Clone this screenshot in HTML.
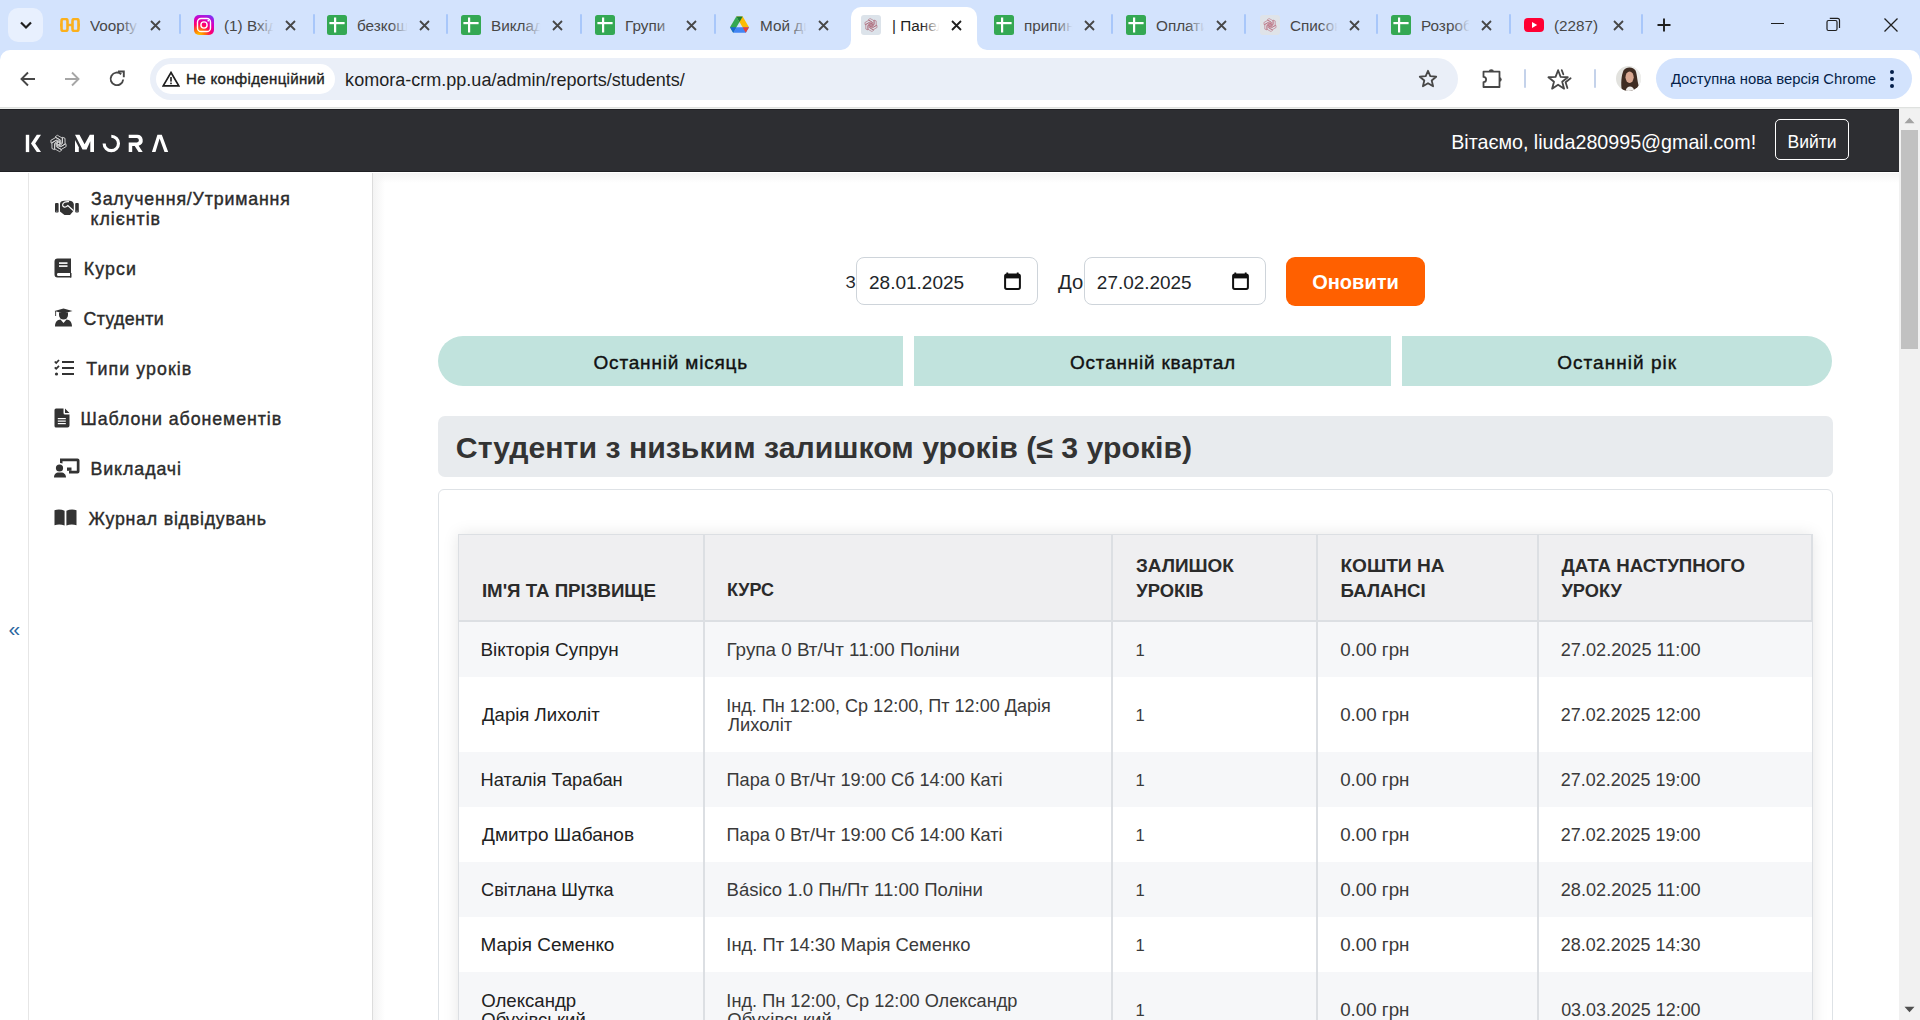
<!DOCTYPE html>
<html><head><meta charset="utf-8">
<style>
*{box-sizing:border-box;margin:0;padding:0}
html,body{width:1920px;height:1020px;overflow:hidden;background:#fff;font-family:"Liberation Sans",sans-serif;color:#333}
.abs{position:absolute}
#tabs{position:absolute;left:0;top:0;width:1920px;height:50px;background:#d3e3fd}
#toolbar{position:absolute;left:0;top:50px;width:1920px;height:57px;background:#fff}
.ttl{top:15.5px;height:21px;font-size:15.3px;line-height:20px;white-space:nowrap;overflow:hidden}
.fade{position:absolute;right:0;top:0;width:22px;height:20px}
</style></head><body>
<div id="tabs">
  <div class="abs" style="left:8px;top:8px;width:35px;height:34px;border-radius:10px;background:#e8f0fe"></div>
  <svg class="abs" style="left:19px;top:19px" width="14" height="12" viewBox="0 0 14 12"><path d="M2 3.5 L7 8.5 L12 3.5" fill="none" stroke="#1f1f1f" stroke-width="2.2"/></svg>
  <!-- active tab -->
  <div class="abs" style="left:851px;top:7px;width:126px;height:44px;background:#fff;border-radius:10px 10px 0 0"></div>
  <div class="abs" style="left:839px;top:40px;width:12px;height:11px;background:#fff"></div>
  <div class="abs" style="left:829px;top:30px;width:22px;height:20px;background:#d3e3fd;border-radius:0 0 10px 0"></div>
  <div class="abs" style="left:977px;top:40px;width:12px;height:11px;background:#fff"></div>
  <div class="abs" style="left:977px;top:30px;width:22px;height:20px;background:#d3e3fd;border-radius:0 0 0 10px"></div>
  <svg class="abs" style="left:60px;top:18px" width="20" height="14" viewBox="0 0 20 14"><rect x="1.5" y="1" width="6" height="12" rx="2" fill="none" stroke="#fbb01c" stroke-width="2.6"/><rect x="12.5" y="1" width="6" height="12" rx="2" fill="none" stroke="#fbb01c" stroke-width="2.6"/><rect x="7" y="5.8" width="6" height="2.4" fill="#fbb01c"/><rect x="0" y="5.5" width="1.6" height="3" fill="#fbb01c"/><rect x="18.4" y="5.5" width="1.6" height="3" fill="#fbb01c"/></svg>
<div class="abs ttl" style="left:90px;width:53px;color:#474747">Voopty<span class="fade" style="background:linear-gradient(90deg,rgba(0,0,0,0),#d3e3fd 80%)"></span></div>
<svg class="abs" style="left:150.0px;top:19.5px" width="11" height="11" viewBox="0 0 11 11"><path d="M1 1 L10 10 M10 1 L1 10" stroke="#474747" stroke-width="1.8"/></svg>
<div class="abs" style="left:179px;top:14px;width:2px;height:20px;border-radius:1px;background:#a8c7fa"></div>
<svg class="abs" style="left:194px;top:15px" width="20" height="20" viewBox="0 0 20 20"><defs><radialGradient id="ig" cx="0.25" cy="1.05" r="1.2"><stop offset="0" stop-color="#ffd600"/><stop offset="0.25" stop-color="#ff7a00"/><stop offset="0.5" stop-color="#ff0069"/><stop offset="0.75" stop-color="#d300c5"/><stop offset="1" stop-color="#7638fa"/></radialGradient></defs><rect width="20" height="20" rx="5" fill="url(#ig)"/><rect x="3.5" y="3.5" width="13" height="13" rx="3.6" fill="none" stroke="#fff" stroke-width="1.4"/><circle cx="10" cy="10" r="3.1" fill="none" stroke="#fff" stroke-width="1.4"/><circle cx="14.3" cy="5.7" r="0.9" fill="#fff"/></svg>
<div class="abs ttl" style="left:224px;width:54px;color:#474747">(1) Вхід<span class="fade" style="background:linear-gradient(90deg,rgba(0,0,0,0),#d3e3fd 80%)"></span></div>
<svg class="abs" style="left:284.5px;top:19.5px" width="11" height="11" viewBox="0 0 11 11"><path d="M1 1 L10 10 M10 1 L1 10" stroke="#474747" stroke-width="1.8"/></svg>
<div class="abs" style="left:313px;top:14px;width:2px;height:20px;border-radius:1px;background:#a8c7fa"></div>
<svg class="abs" style="left:327px;top:15px" width="20" height="20" viewBox="0 0 20 20"><rect x="0" y="0" width="20" height="20" rx="2.5" fill="#34a853"/><rect x="7" y="2.5" width="2.2" height="15" fill="#fff"/><rect x="2.4" y="7" width="15.2" height="2.2" fill="#fff"/></svg>
<div class="abs ttl" style="left:357px;width:55px;color:#474747">безкоштовні<span class="fade" style="background:linear-gradient(90deg,rgba(0,0,0,0),#d3e3fd 80%)"></span></div>
<svg class="abs" style="left:418.5px;top:19.5px" width="11" height="11" viewBox="0 0 11 11"><path d="M1 1 L10 10 M10 1 L1 10" stroke="#474747" stroke-width="1.8"/></svg>
<div class="abs" style="left:446px;top:14px;width:2px;height:20px;border-radius:1px;background:#a8c7fa"></div>
<svg class="abs" style="left:461px;top:15px" width="20" height="20" viewBox="0 0 20 20"><rect x="0" y="0" width="20" height="20" rx="2.5" fill="#34a853"/><rect x="7" y="2.5" width="2.2" height="15" fill="#fff"/><rect x="2.4" y="7" width="15.2" height="2.2" fill="#fff"/></svg>
<div class="abs ttl" style="left:491px;width:54px;color:#474747">Викладачі<span class="fade" style="background:linear-gradient(90deg,rgba(0,0,0,0),#d3e3fd 80%)"></span></div>
<svg class="abs" style="left:552.0px;top:19.5px" width="11" height="11" viewBox="0 0 11 11"><path d="M1 1 L10 10 M10 1 L1 10" stroke="#474747" stroke-width="1.8"/></svg>
<div class="abs" style="left:580px;top:14px;width:2px;height:20px;border-radius:1px;background:#a8c7fa"></div>
<svg class="abs" style="left:595px;top:15px" width="20" height="20" viewBox="0 0 20 20"><rect x="0" y="0" width="20" height="20" rx="2.5" fill="#34a853"/><rect x="7" y="2.5" width="2.2" height="15" fill="#fff"/><rect x="2.4" y="7" width="15.2" height="2.2" fill="#fff"/></svg>
<div class="abs ttl" style="left:625px;width:54px;color:#474747">Групи<span class="fade" style="background:linear-gradient(90deg,rgba(0,0,0,0),#d3e3fd 80%)"></span></div>
<svg class="abs" style="left:685.5px;top:19.5px" width="11" height="11" viewBox="0 0 11 11"><path d="M1 1 L10 10 M10 1 L1 10" stroke="#474747" stroke-width="1.8"/></svg>
<div class="abs" style="left:714px;top:14px;width:2px;height:20px;border-radius:1px;background:#a8c7fa"></div>
<svg class="abs" style="left:730px;top:16px" width="19" height="17" viewBox="0 0 19 17"><path d="M6.3 0.5 H12.7 L19 11.3 H12.6 Z" fill="#fbbc04"/><path d="M6.3 0.5 L0 11.3 L3.2 16.7 L9.5 5.9 Z" fill="#34a853"/><path d="M3.2 16.7 H15.8 L19 11.3 H6.4 Z" fill="#4285f4"/><path d="M15.8 16.7 L19 11.3 H12.6 Z" fill="#ea4335"/><path d="M6.3 0.5 H12.7 L9.5 5.9 Z" fill="#188038"/><path d="M0 11.3 L3.2 16.7 L6.4 11.3 Z" fill="#1967d2"/></svg>
<div class="abs ttl" style="left:760px;width:51px;color:#474747">Мой диск<span class="fade" style="background:linear-gradient(90deg,rgba(0,0,0,0),#d3e3fd 80%)"></span></div>
<svg class="abs" style="left:818.0px;top:19.5px" width="11" height="11" viewBox="0 0 11 11"><path d="M1 1 L10 10 M10 1 L1 10" stroke="#474747" stroke-width="1.8"/></svg>
<svg class="abs" style="left:861px;top:15px" width="20" height="20" viewBox="0 0 20 20"><rect width="20" height="20" rx="3" fill="#dce3ea"/><g fill="none" stroke="#a24e60" stroke-width="0.5" stroke-linejoin="round" transform="translate(10,10)"><path d="M-0.95 -6.5 L3 -4.3 V0.3 L0.95 1.5 V-3.1 L-2.7 -5.15 Z" transform="rotate(0)"/><path d="M-0.95 -6.5 L3 -4.3 V0.3 L0.95 1.5 V-3.1 L-2.7 -5.15 Z" transform="rotate(60)"/><path d="M-0.95 -6.5 L3 -4.3 V0.3 L0.95 1.5 V-3.1 L-2.7 -5.15 Z" transform="rotate(120)"/><path d="M-0.95 -6.5 L3 -4.3 V0.3 L0.95 1.5 V-3.1 L-2.7 -5.15 Z" transform="rotate(180)"/><path d="M-0.95 -6.5 L3 -4.3 V0.3 L0.95 1.5 V-3.1 L-2.7 -5.15 Z" transform="rotate(240)"/><path d="M-0.95 -6.5 L3 -4.3 V0.3 L0.95 1.5 V-3.1 L-2.7 -5.15 Z" transform="rotate(300)"/></g></svg>
<div class="abs ttl" style="left:892px;width:52px;color:#1f1f1f">| Панель<span class="fade" style="background:linear-gradient(90deg,rgba(0,0,0,0),#fff 80%)"></span></div>
<svg class="abs" style="left:951.0px;top:19.5px" width="11" height="11" viewBox="0 0 11 11"><path d="M1 1 L10 10 M10 1 L1 10" stroke="#1f1f1f" stroke-width="1.8"/></svg>
<svg class="abs" style="left:994px;top:15px" width="20" height="20" viewBox="0 0 20 20"><rect x="0" y="0" width="20" height="20" rx="2.5" fill="#34a853"/><rect x="7" y="2.5" width="2.2" height="15" fill="#fff"/><rect x="2.4" y="7" width="15.2" height="2.2" fill="#fff"/></svg>
<div class="abs ttl" style="left:1024px;width:53px;color:#474747">припинені<span class="fade" style="background:linear-gradient(90deg,rgba(0,0,0,0),#d3e3fd 80%)"></span></div>
<svg class="abs" style="left:1083.5px;top:19.5px" width="11" height="11" viewBox="0 0 11 11"><path d="M1 1 L10 10 M10 1 L1 10" stroke="#474747" stroke-width="1.8"/></svg>
<div class="abs" style="left:1111px;top:14px;width:2px;height:20px;border-radius:1px;background:#a8c7fa"></div>
<svg class="abs" style="left:1126px;top:15px" width="20" height="20" viewBox="0 0 20 20"><rect x="0" y="0" width="20" height="20" rx="2.5" fill="#34a853"/><rect x="7" y="2.5" width="2.2" height="15" fill="#fff"/><rect x="2.4" y="7" width="15.2" height="2.2" fill="#fff"/></svg>
<div class="abs ttl" style="left:1156px;width:53px;color:#474747">Оплати<span class="fade" style="background:linear-gradient(90deg,rgba(0,0,0,0),#d3e3fd 80%)"></span></div>
<svg class="abs" style="left:1215.5px;top:19.5px" width="11" height="11" viewBox="0 0 11 11"><path d="M1 1 L10 10 M10 1 L1 10" stroke="#474747" stroke-width="1.8"/></svg>
<div class="abs" style="left:1244px;top:14px;width:2px;height:20px;border-radius:1px;background:#a8c7fa"></div>
<svg class="abs" style="left:1260px;top:15px" width="20" height="20" viewBox="0 0 20 20"><rect width="20" height="20" rx="3" fill="#dfe3e8"/><g fill="none" stroke="#b55a6c" stroke-width="0.5" stroke-linejoin="round" transform="translate(10,10)"><path d="M-0.95 -6.5 L3 -4.3 V0.3 L0.95 1.5 V-3.1 L-2.7 -5.15 Z" transform="rotate(0)"/><path d="M-0.95 -6.5 L3 -4.3 V0.3 L0.95 1.5 V-3.1 L-2.7 -5.15 Z" transform="rotate(60)"/><path d="M-0.95 -6.5 L3 -4.3 V0.3 L0.95 1.5 V-3.1 L-2.7 -5.15 Z" transform="rotate(120)"/><path d="M-0.95 -6.5 L3 -4.3 V0.3 L0.95 1.5 V-3.1 L-2.7 -5.15 Z" transform="rotate(180)"/><path d="M-0.95 -6.5 L3 -4.3 V0.3 L0.95 1.5 V-3.1 L-2.7 -5.15 Z" transform="rotate(240)"/><path d="M-0.95 -6.5 L3 -4.3 V0.3 L0.95 1.5 V-3.1 L-2.7 -5.15 Z" transform="rotate(300)"/></g></svg>
<div class="abs ttl" style="left:1290px;width:52px;color:#474747">Список<span class="fade" style="background:linear-gradient(90deg,rgba(0,0,0,0),#d3e3fd 80%)"></span></div>
<svg class="abs" style="left:1348.5px;top:19.5px" width="11" height="11" viewBox="0 0 11 11"><path d="M1 1 L10 10 M10 1 L1 10" stroke="#474747" stroke-width="1.8"/></svg>
<div class="abs" style="left:1376px;top:14px;width:2px;height:20px;border-radius:1px;background:#a8c7fa"></div>
<svg class="abs" style="left:1391px;top:15px" width="20" height="20" viewBox="0 0 20 20"><rect x="0" y="0" width="20" height="20" rx="2.5" fill="#34a853"/><rect x="7" y="2.5" width="2.2" height="15" fill="#fff"/><rect x="2.4" y="7" width="15.2" height="2.2" fill="#fff"/></svg>
<div class="abs ttl" style="left:1421px;width:53px;color:#474747">Розробка<span class="fade" style="background:linear-gradient(90deg,rgba(0,0,0,0),#d3e3fd 80%)"></span></div>
<svg class="abs" style="left:1480.5px;top:19.5px" width="11" height="11" viewBox="0 0 11 11"><path d="M1 1 L10 10 M10 1 L1 10" stroke="#474747" stroke-width="1.8"/></svg>
<div class="abs" style="left:1509px;top:14px;width:2px;height:20px;border-radius:1px;background:#a8c7fa"></div>
<svg class="abs" style="left:1524px;top:18px" width="20" height="14" viewBox="0 0 20 14"><rect width="20" height="14" rx="4" fill="#ff0033"/><path d="M8 4 L13.2 7 L8 10 Z" fill="#fff"/></svg>
<div class="abs ttl" style="left:1554px;width:52px;color:#474747">(2287)</div>
<svg class="abs" style="left:1613.0px;top:19.5px" width="11" height="11" viewBox="0 0 11 11"><path d="M1 1 L10 10 M10 1 L1 10" stroke="#474747" stroke-width="1.8"/></svg>
<div class="abs" style="left:1641px;top:14px;width:2px;height:20px;border-radius:1px;background:#a8c7fa"></div>
<svg class="abs" style="left:1657px;top:18px" width="14" height="14" viewBox="0 0 14 14"><path d="M7 0.5 V13.5 M0.5 7 H13.5" stroke="#1f1f1f" stroke-width="1.9"/></svg>
<div class="abs" style="left:1771px;top:23px;width:13px;height:1.3px;background:#1f1f1f"></div>
<svg class="abs" style="left:1826px;top:17px" width="15" height="15" viewBox="0 0 15 15"><rect x="1" y="3.5" width="10" height="10" rx="1.5" fill="none" stroke="#1f1f1f" stroke-width="1.2"/><path d="M3.8 1.3 H11.5 A2 2 0 0 1 13.5 3.3 V11" fill="none" stroke="#1f1f1f" stroke-width="1.2"/></svg>
<svg class="abs" style="left:1884px;top:17.5px" width="14" height="14" viewBox="0 0 14 14"><path d="M0.5 0.5 L13.5 13.5 M13.5 0.5 L0.5 13.5" stroke="#1f1f1f" stroke-width="1.3"/></svg>
</div>
<div id="toolbar">
  <div class="abs" style="left:0;top:0;width:10px;height:10px;background:#d3e3fd"></div>
  <div class="abs" style="left:0;top:0;width:20px;height:20px;background:#fff;border-radius:10px 0 0 0"></div>
  <div class="abs" style="left:1910px;top:0;width:10px;height:10px;background:#d3e3fd"></div><div class="abs" style="left:1900px;top:0;width:20px;height:20px;background:#fff;border-radius:0 10px 0 0"></div>
  <!-- back -->
  <svg class="abs" style="left:19px;top:20px" width="18" height="18" viewBox="0 0 18 18"><path d="M16 9 H3 M9 2.5 L2.5 9 L9 15.5" fill="none" stroke="#474747" stroke-width="1.9"/></svg>
  <svg class="abs" style="left:63px;top:20px" width="18" height="18" viewBox="0 0 18 18"><path d="M2 9 H15 M9 2.5 L15.5 9 L9 15.5" fill="none" stroke="#a6a6a6" stroke-width="1.9"/></svg>
  <svg class="abs" style="left:108px;top:20px" width="18" height="18" viewBox="0 0 18 18"><path d="M15.2 9.5 A6.3 6.3 0 1 1 13.2 4.2" fill="none" stroke="#474747" stroke-width="1.9"/><path d="M10 1.5 H15.8 V7.3" fill="none" stroke="#474747" stroke-width="1.9"/></svg>
  <!-- omnibox -->
  <div class="abs" style="left:150px;top:8px;width:1308px;height:42px;border-radius:21px;background:#eaeff8"></div>
  <div class="abs" style="left:156px;top:14px;width:179px;height:30px;border-radius:15px;background:#fff"></div>
  <svg class="abs" style="left:162px;top:21px" width="18" height="16" viewBox="0 0 18 16"><path d="M9 1.5 L16.8 14.8 H1.2 Z" fill="none" stroke="#1f1f1f" stroke-width="1.7" stroke-linejoin="miter"/><rect x="8.2" y="6" width="1.6" height="4.6" fill="#1f1f1f"/><rect x="8.2" y="11.6" width="1.6" height="1.6" fill="#1f1f1f"/></svg>
  <div class="abs" style="left:185.99px;top:19.27px;font-size:15.10px;font-weight:normal;line-height:20px;white-space:nowrap;color:#1f1f1f;-webkit-text-stroke:0.35px #1f1f1f;letter-spacing:0.304px">Не конфіденційний</div>
  <div class="abs" style="left:345.12px;top:18.15px;font-size:18.04px;font-weight:normal;line-height:24px;white-space:nowrap;color:#1f1f1f">komora-crm.pp.ua/admin/reports/students/</div>
  <svg class="abs" style="left:1418px;top:19px" width="20" height="19" viewBox="0 0 20 19"><path d="M10 1.8 L12.3 7.2 L18.2 7.7 L13.7 11.5 L15.1 17.3 L10 14.2 L4.9 17.3 L6.3 11.5 L1.8 7.7 L7.7 7.2 Z" fill="none" stroke="#474747" stroke-width="1.8" stroke-linejoin="round"/></svg>
  <!-- puzzle -->
  <svg class="abs" style="left:1480px;top:16px" width="24" height="24" viewBox="0 0 24 24"><path d="M3.5 5.7 H19.5 V21 H3.5 V16.1 A2.6 2.6 0 0 0 3.5 10.9 Z" fill="none" stroke="#474747" stroke-width="1.8" stroke-linejoin="round"/><path d="M8.8 5.8 A2.5 2.5 0 0 1 13.8 5.8 Z" fill="#474747"/><path d="M19.4 11.2 A2.3 2.3 0 0 1 19.4 15.8 Z" fill="#474747"/></svg>
  <div class="abs" style="left:1524px;top:19px;width:2px;height:19px;background:#c4d2ea;border-radius:1px"></div>
  <svg class="abs" style="left:1546px;top:16px" width="27" height="24" viewBox="0 0 27 24"><path d="M12.10 4.20 L14.63 10.92 L21.80 11.25 L16.19 15.73 L18.10 22.65 L12.10 18.70 L6.10 22.65 L8.01 15.73 L2.40 11.25 L9.57 10.92 Z" fill="none" stroke="#474747" stroke-width="1.8" stroke-linejoin="round"/><path d="M15.8 4.2 L17.3 8.3 M24.6 12.3 L19.6 16.2 L21.4 22" fill="none" stroke="#474747" stroke-width="1.8" stroke-linecap="round" stroke-linejoin="round"/></svg>
  <div class="abs" style="left:1594px;top:19px;width:2px;height:19px;background:#c4d2ea;border-radius:1px"></div>
  <!-- avatar -->
  <svg class="abs" style="left:1616px;top:16px" width="25" height="25" viewBox="0 0 25 25"><defs><clipPath id="av"><circle cx="12.5" cy="12.5" r="12.5"/></clipPath></defs><g clip-path="url(#av)"><rect width="25" height="25" fill="#e2e2de"/><rect x="16" width="9" height="25" fill="#eeeeec"/><path d="M6 25 C4.5 18 5.5 9 7.5 4.5 C10 0.5 17 0.5 19.5 4.5 C21.5 9 21 17 24 23 L21 25 Z" fill="#3f2c22"/><ellipse cx="13.6" cy="11.2" rx="4.1" ry="5.7" fill="#d9a892"/><path d="M9.5 25 C10.5 21.5 12 20.5 14 20.5 C16 20.5 17.5 21.5 18.5 25 Z" fill="#efedeb"/></g></svg>
  <!-- chrome update pill -->
  <div class="abs" style="left:1656px;top:8px;width:256px;height:41px;border-radius:21px;background:#d3e3fd"></div>
  <div class="abs" style="left:1670.90px;top:19.36px;font-size:14.83px;font-weight:normal;line-height:20px;white-space:nowrap;color:#041e49">Доступна нова версія Chrome</div>
  <div class="abs" style="left:1890px;top:20px;width:4px;height:4px;border-radius:2px;background:#041e49"></div>
  <div class="abs" style="left:1890px;top:27px;width:4px;height:4px;border-radius:2px;background:#041e49"></div>
  <div class="abs" style="left:1890px;top:34px;width:4px;height:4px;border-radius:2px;background:#041e49"></div>
</div>

<div class="abs" style="left:0;top:107px;width:1920px;height:1px;background:#dfe1df"></div><div class="abs" style="left:0;top:108px;width:1920px;height:1px;background:#eceeec"></div>
<div class="abs" style="left:0;top:109px;width:1899px;height:63px;background:#2d2e32"></div>
<div class="abs" style="left:0;top:109px;width:1899px;height:1px;background:#202125"></div>
<div class="abs" style="left:0;top:171px;width:1899px;height:1px;background:#1f2024"></div>
<svg class="abs" style="left:24px;top:133px" width="148" height="22" viewBox="0 0 148 22"><g fill="#fff">
<rect x="1.8" y="1.8" width="3.4" height="17.3"/><path d="M12.8 1.8 H17 L11.2 10.45 L17 19.1 H12.8 L7 10.45 Z"/>
<path d="M51 6.9 L54.8 14.2 V19.1 H51 Z"/><path d="M51 1.7 H55.5 L60.6 11.2 L65.8 1.7 H70 V19.1 H66.3 V8.2 L62.6 16.5 H58.5 Z"/>
<path d="M87.3 1.7 A8.75 8.75 0 1 1 78.55 10.45 H81.7 A5.6 5.6 0 1 0 87.3 4.85 Z"/>
<path d="M4.7 1.8 H13 A5.6 5.6 0 0 1 14.6 12.8 L18.7 19.1 H14.6 L10.7 13 H8.2 V19.1 H4.7 V9.6 H13 A2.4 2.4 0 0 0 13 4.9 H4.7 Z" transform="translate(100,0)"/>
<path d="M127.9 19.1 L133.4 1.8 H137.8 L144.2 19.1 H140.5 L135.6 5.5 L131.5 19.1 Z"/>
</g><g fill="none" stroke="#d8d8d8" stroke-width="0.85" stroke-linejoin="round" transform="translate(34.5,10.45)"><path d="M-1.2 -8.2 L3.8 -5.4 V0.4 L1.2 1.9 V-3.9 L-3.4 -6.5 Z" transform="rotate(0)"/><path d="M-1.2 -8.2 L3.8 -5.4 V0.4 L1.2 1.9 V-3.9 L-3.4 -6.5 Z" transform="rotate(60)"/><path d="M-1.2 -8.2 L3.8 -5.4 V0.4 L1.2 1.9 V-3.9 L-3.4 -6.5 Z" transform="rotate(120)"/><path d="M-1.2 -8.2 L3.8 -5.4 V0.4 L1.2 1.9 V-3.9 L-3.4 -6.5 Z" transform="rotate(180)"/><path d="M-1.2 -8.2 L3.8 -5.4 V0.4 L1.2 1.9 V-3.9 L-3.4 -6.5 Z" transform="rotate(240)"/><path d="M-1.2 -8.2 L3.8 -5.4 V0.4 L1.2 1.9 V-3.9 L-3.4 -6.5 Z" transform="rotate(300)"/></g></svg>
<div class="abs" style="left:1451.23px;top:130.48px;font-size:19.68px;font-weight:normal;line-height:24px;white-space:nowrap;color:#fff">Вітаємо, liuda280995@gmail.com!</div>
<div class="abs" style="left:1775px;top:119px;width:74px;height:41px;border:1px solid #fff;border-radius:5px"></div>
<div class="abs" style="left:1787.49px;top:130.81px;font-size:17.57px;font-weight:normal;line-height:22px;white-space:nowrap;color:#fff">Вийти</div>
<div class="abs" style="left:1899px;top:109px;width:21px;height:911px;background:#f1f1f1"></div>
<div class="abs" style="left:1901px;top:130px;width:17px;height:219px;background:#c1c1c1"></div>
<svg class="abs" style="left:1904px;top:117px" width="11" height="7" viewBox="0 0 11 7"><path d="M0.5 6.2 L5.5 0.8 L10.5 6.2 Z" fill="#a3a3a3"/></svg>
<svg class="abs" style="left:1904px;top:1006px" width="11" height="7" viewBox="0 0 11 7"><path d="M0.5 0.8 L5.5 6.2 L10.5 0.8 Z" fill="#505050"/></svg>
<div class="abs" style="left:373px;top:173px;width:12px;height:847px;background:linear-gradient(90deg,#f3f3f3,rgba(255,255,255,0))"></div>
<div class="abs" style="left:373px;top:173px;width:1526px;height:10px;background:linear-gradient(180deg,#f4f4f4,rgba(255,255,255,0))"></div>
<div class="abs" style="left:372px;top:173px;width:1px;height:847px;background:#dcdcdc"></div>
<div class="abs" style="left:28px;top:173px;width:1px;height:847px;background:#e6e6e6"></div>
<div class="abs" style="left:8.5px;top:618px;font-size:21px;color:#2a66a0;line-height:22px">«</div>
<div class="abs" style="left:91.07px;top:188.93px;font-size:17.80px;font-weight:normal;line-height:20px;white-space:nowrap;letter-spacing:0.830px;-webkit-text-stroke:0.4px currentColor;color:#2b2b2b">Залучення/Утримання</div>
<div class="abs" style="left:90.53px;top:209.03px;font-size:17.80px;font-weight:normal;line-height:20px;white-space:nowrap;letter-spacing:0.971px;-webkit-text-stroke:0.4px currentColor;color:#2b2b2b">клієнтів</div>
<div class="abs" style="left:83.78px;top:259.03px;font-size:17.80px;font-weight:normal;line-height:20px;white-space:nowrap;letter-spacing:1.083px;-webkit-text-stroke:0.4px currentColor;color:#2b2b2b">Курси</div>
<div class="abs" style="left:83.61px;top:309.33px;font-size:17.80px;font-weight:normal;line-height:20px;white-space:nowrap;letter-spacing:0.341px;-webkit-text-stroke:0.4px currentColor;color:#2b2b2b">Студенти</div>
<div class="abs" style="left:86.34px;top:358.93px;font-size:17.80px;font-weight:normal;line-height:20px;white-space:nowrap;letter-spacing:1.073px;-webkit-text-stroke:0.4px currentColor;color:#2b2b2b">Типи уроків</div>
<div class="abs" style="left:80.58px;top:409.33px;font-size:17.80px;font-weight:normal;line-height:20px;white-space:nowrap;letter-spacing:0.927px;-webkit-text-stroke:0.4px currentColor;color:#2b2b2b">Шаблони абонементів</div>
<div class="abs" style="left:90.48px;top:458.83px;font-size:17.80px;font-weight:normal;line-height:20px;white-space:nowrap;letter-spacing:0.927px;-webkit-text-stroke:0.4px currentColor;color:#2b2b2b">Викладачі</div>
<div class="abs" style="left:88.52px;top:509.33px;font-size:17.80px;font-weight:normal;line-height:20px;white-space:nowrap;letter-spacing:0.762px;-webkit-text-stroke:0.4px currentColor;color:#2b2b2b">Журнал відвідувань</div>
<svg class="abs" style="left:54px;top:200px" width="26" height="17" viewBox="0 0 26 17"><g fill="#333"><rect x="1" y="3" width="3.6" height="9.6" rx="1"/><rect x="21.2" y="3" width="3.6" height="9.6" rx="1"/>
<path d="M6 3.8 C6 2 8 0.8 10.5 0.8 H15.5 C17.8 0.8 19.8 2.4 19.8 4.5 V10.5 L16 14.9 H10.5 L6 11.4 Z"/></g>
<g fill="none" stroke="#fff" stroke-width="1.2"><path d="M15 1.6 C11.5 1.2 8.6 2.8 8.6 5 C8.6 7 10.6 7.6 12.6 6.4 L13.8 5.6 L19.6 10.8"/></g>
<rect x="2.2" y="10.6" width="1.2" height="1.2" fill="#8a8f99"/><rect x="22.4" y="10.6" width="1.2" height="1.2" fill="#8a8f99"/></svg>
<svg class="abs" style="left:54px;top:258px" width="19" height="20" viewBox="0 0 19 20"><path d="M3.5 0.5 H17 V15 H4 A1.6 1.6 0 0 0 4 18 H17 V19.5 H3.5 A3 3 0 0 1 0.5 16.5 V3.5 A3 3 0 0 1 3.5 0.5 Z" fill="#333"/><rect x="5" y="4.3" width="8.5" height="1.6" fill="#fff"/><rect x="5" y="7.3" width="8.5" height="1.6" fill="#fff"/><rect x="16" y="15" width="1.5" height="4.5" fill="#333"/></svg>
<svg class="abs" style="left:54px;top:308px" width="19" height="19" viewBox="0 0 19 19"><g fill="#333"><path d="M9.5 0.5 L18.5 3 L9.5 5.6 L0.5 3 Z"/><path d="M5 4.5 H14 V7 A4.5 4.5 0 0 1 5 7 Z"/><rect x="1.2" y="3" width="0.9" height="5"/><path d="M1 18.5 C1 14 3.5 11.8 6.5 11.6 L9.5 15 L12.5 11.6 C15.5 11.8 18 14 18 18.5 Z"/></g></svg>
<svg class="abs" style="left:54px;top:359px" width="21" height="17" viewBox="0 0 21 17"><g fill="none" stroke="#333" stroke-width="1.8"><path d="M0.8 2.5 L2.2 4 L5 1"/><path d="M0.8 8.3 L2.2 9.8 L5 6.8"/><path d="M8 3 H20 M8 9 H20 M8 15 H20"/></g><circle cx="2.5" cy="15" r="1.6" fill="#333"/></svg>
<svg class="abs" style="left:54px;top:408px" width="16" height="20" viewBox="0 0 16 20"><path d="M2 0.5 H9.5 V5 A1.5 1.5 0 0 0 11 6.5 H15.5 V17.5 A2 2 0 0 1 13.5 19.5 H2 A1.5 1.5 0 0 1 0.5 18 V2 A1.5 1.5 0 0 1 2 0.5 Z M11 0.5 L15.5 5 H11 Z" fill="#333"/><rect x="3.8" y="10" width="8" height="1.2" fill="#fff"/><rect x="3.8" y="12.5" width="8" height="1.2" fill="#fff"/><rect x="3.8" y="15" width="8" height="1.2" fill="#fff"/></svg>
<svg class="abs" style="left:54px;top:458px" width="26" height="20" viewBox="0 0 26 20"><g fill="#333"><path d="M6 0.5 H23.5 A2 2 0 0 1 25.5 2.5 V13.5 A2 2 0 0 1 23.5 15.5 H15 V12.8 H22.8 V3.2 H8.5 V5.5 C7.8 5.1 6.8 4.9 6 5 Z"/><path d="M13 9.5 H17.5 V12.8 H13 Z"/><circle cx="5.5" cy="10" r="3.6"/><path d="M0 19.5 C0 16 2 14.5 4.5 14.5 H7 C10 14.5 12 16.5 12 19.5 Z"/></g></svg>
<svg class="abs" style="left:54px;top:509px" width="23" height="17" viewBox="0 0 23 17"><g fill="#333"><path d="M0.5 1.3 C3.5 0.2 7.5 0.3 10.6 1.8 V16.5 C7.5 15.2 3.5 15.2 0.5 16.2 Z"/><path d="M12.4 1.8 C15.5 0.3 19.5 0.2 22.5 1.3 V16.2 C19.5 15.2 15.5 15.2 12.4 16.5 Z"/></g></svg>
<div class="abs" style="left:845.49px;top:272.42px;font-size:16.98px;font-weight:normal;line-height:22px;white-space:nowrap;color:#212529">З</div>
<div class="abs" style="left:856px;top:257px;width:182px;height:48px;border:1px solid #ced4da;border-radius:8px;background:#fff"></div>
<div class="abs" style="left:869.05px;top:271.71px;font-size:19.01px;font-weight:normal;line-height:22px;white-space:nowrap;color:#212529">28.01.2025</div>
<svg class="abs" style="left:1004px;top:272px" width="17" height="18" viewBox="0 0 17 18"><path d="M3.3 0.5 V2.5 M13.7 0.5 V2.5" stroke="#111" stroke-width="1.8"/><rect x="1.1" y="2.4" width="14.8" height="14.5" rx="1.6" fill="none" stroke="#111" stroke-width="2"/><rect x="1.1" y="2.4" width="14.8" height="4" fill="#111"/></svg>
<div class="abs" style="left:1058.00px;top:271.28px;font-size:20.27px;font-weight:normal;line-height:22px;white-space:nowrap;color:#212529">До</div>
<div class="abs" style="left:1084px;top:257px;width:182px;height:48px;border:1px solid #ced4da;border-radius:8px;background:#fff"></div>
<div class="abs" style="left:1096.85px;top:271.73px;font-size:18.95px;font-weight:normal;line-height:22px;white-space:nowrap;color:#212529">27.02.2025</div>
<svg class="abs" style="left:1232px;top:272px" width="17" height="18" viewBox="0 0 17 18"><path d="M3.3 0.5 V2.5 M13.7 0.5 V2.5" stroke="#111" stroke-width="1.8"/><rect x="1.1" y="2.4" width="14.8" height="14.5" rx="1.6" fill="none" stroke="#111" stroke-width="2"/><rect x="1.1" y="2.4" width="14.8" height="4" fill="#111"/></svg>
<div class="abs" style="left:1286px;top:257px;width:139px;height:49px;border-radius:9px;background:#ff6000"></div>
<div class="abs" style="left:1312.20px;top:271.16px;font-size:20.04px;font-weight:bold;line-height:22px;white-space:nowrap;color:#fff">Оновити</div>
<div class="abs" style="left:438px;width:465px;background:#c1e3dd;height:50px;top:336px;border-radius:25px 0 0 25px"></div>
<div class="abs" style="left:914px;width:477px;background:#c1e3dd;height:50px;top:336px"></div>
<div class="abs" style="left:1402px;width:430px;background:#c1e3dd;height:50px;top:336px;border-radius:0 25px 25px 0"></div>
<div class="abs" style="left:593.54px;top:351.92px;font-size:19.00px;font-weight:normal;line-height:22px;white-space:nowrap;letter-spacing:0.811px;-webkit-text-stroke:0.4px currentColor;color:#111">Останній місяць</div>
<div class="abs" style="left:1070.04px;top:351.92px;font-size:19.00px;font-weight:normal;line-height:22px;white-space:nowrap;letter-spacing:0.779px;-webkit-text-stroke:0.4px currentColor;color:#111">Останній квартал</div>
<div class="abs" style="left:1557.24px;top:351.92px;font-size:19.00px;font-weight:normal;line-height:22px;white-space:nowrap;letter-spacing:1.026px;-webkit-text-stroke:0.4px currentColor;color:#111">Останній рік</div>
<div class="abs" style="left:438px;top:416px;width:1395px;height:61px;background:#e8ebee;border-radius:7px"></div>
<div class="abs" style="left:455.79px;top:429.91px;font-size:30.27px;font-weight:bold;line-height:36px;white-space:nowrap;color:#333">Студенти з низьким залишком уроків (≤ 3 уроків)</div>
<div class="abs" style="left:438px;top:489px;width:1395px;height:600px;border:1px solid #dee2e6;border-radius:6px;background:#fff"></div>
<div class="abs" style="left:458px;top:534px;width:1355px;height:600px;box-shadow:0 0 15px rgba(0,0,0,.1)"></div>
<div class="abs" style="left:458px;top:534px;width:1355px;height:88px;background:#efeff1;border-top:1px solid #dcdfe3;border-left:1px solid #dcdfe3"></div>
<div class="abs" style="left:458px;top:620px;width:1355px;height:2px;background:#dcdfe3"></div>
<div class="abs" style="left:459px;top:622px;width:1354px;height:55px;background:#f6f7f9"></div>
<div class="abs" style="left:459px;top:677px;width:1354px;height:75px;background:#fff"></div>
<div class="abs" style="left:459px;top:752px;width:1354px;height:55px;background:#f6f7f9"></div>
<div class="abs" style="left:459px;top:807px;width:1354px;height:55px;background:#fff"></div>
<div class="abs" style="left:459px;top:862px;width:1354px;height:55px;background:#f6f7f9"></div>
<div class="abs" style="left:459px;top:917px;width:1354px;height:55px;background:#fff"></div>
<div class="abs" style="left:459px;top:972px;width:1354px;height:75px;background:#f6f7f9"></div>
<div class="abs" style="left:480.49px;top:639.94px;font-size:18.93px;font-weight:normal;line-height:20px;white-space:nowrap;color:#212121">Вікторія Супрун</div>
<div class="abs" style="left:726.49px;top:639.97px;font-size:18.83px;font-weight:normal;line-height:20px;white-space:nowrap;color:#3a3a3a">Група 0 Вт/Чт 11:00 Поліни</div>
<div class="abs" style="left:1135.54px;top:640.75px;font-size:16.59px;font-weight:normal;line-height:20px;white-space:nowrap;color:#3a3a3a">1</div>
<div class="abs" style="left:1340.14px;top:640.00px;font-size:18.75px;font-weight:normal;line-height:20px;white-space:nowrap;color:#3a3a3a">0.00 грн</div>
<div class="abs" style="left:1560.79px;top:640.22px;font-size:18.14px;font-weight:normal;line-height:20px;white-space:nowrap;color:#3a3a3a">27.02.2025 11:00</div>
<div class="abs" style="left:482.00px;top:705.06px;font-size:18.59px;font-weight:normal;line-height:20px;white-space:nowrap;color:#212121">Дарія Лихоліт</div>
<div class="abs" style="left:726.37px;top:695.74px;font-size:18.06px;font-weight:normal;line-height:20px;white-space:nowrap;color:#3a3a3a">Інд. Пн 12:00, Ср 12:00, Пт 12:00 Дарія</div>
<div class="abs" style="left:728.00px;top:715.15px;font-size:18.32px;font-weight:normal;line-height:20px;white-space:nowrap;color:#3a3a3a">Лихоліт</div>
<div class="abs" style="left:1135.54px;top:705.75px;font-size:16.59px;font-weight:normal;line-height:20px;white-space:nowrap;color:#3a3a3a">1</div>
<div class="abs" style="left:1340.14px;top:705.00px;font-size:18.75px;font-weight:normal;line-height:20px;white-space:nowrap;color:#3a3a3a">0.00 грн</div>
<div class="abs" style="left:1560.80px;top:705.28px;font-size:17.96px;font-weight:normal;line-height:20px;white-space:nowrap;color:#3a3a3a">27.02.2025 12:00</div>
<div class="abs" style="left:480.54px;top:770.16px;font-size:18.29px;font-weight:normal;line-height:20px;white-space:nowrap;color:#212121">Наталія Тарабан</div>
<div class="abs" style="left:726.55px;top:770.21px;font-size:18.16px;font-weight:normal;line-height:20px;white-space:nowrap;color:#3a3a3a">Пара 0 Вт/Чт 19:00 Сб 14:00 Каті</div>
<div class="abs" style="left:1135.54px;top:770.75px;font-size:16.59px;font-weight:normal;line-height:20px;white-space:nowrap;color:#3a3a3a">1</div>
<div class="abs" style="left:1340.14px;top:770.00px;font-size:18.75px;font-weight:normal;line-height:20px;white-space:nowrap;color:#3a3a3a">0.00 грн</div>
<div class="abs" style="left:1560.80px;top:770.28px;font-size:17.96px;font-weight:normal;line-height:20px;white-space:nowrap;color:#3a3a3a">27.02.2025 19:00</div>
<div class="abs" style="left:482.00px;top:824.90px;font-size:19.04px;font-weight:normal;line-height:20px;white-space:nowrap;color:#212121">Дмитро Шабанов</div>
<div class="abs" style="left:726.55px;top:825.21px;font-size:18.16px;font-weight:normal;line-height:20px;white-space:nowrap;color:#3a3a3a">Пара 0 Вт/Чт 19:00 Сб 14:00 Каті</div>
<div class="abs" style="left:1135.54px;top:825.75px;font-size:16.59px;font-weight:normal;line-height:20px;white-space:nowrap;color:#3a3a3a">1</div>
<div class="abs" style="left:1340.14px;top:825.00px;font-size:18.75px;font-weight:normal;line-height:20px;white-space:nowrap;color:#3a3a3a">0.00 грн</div>
<div class="abs" style="left:1560.80px;top:825.28px;font-size:17.96px;font-weight:normal;line-height:20px;white-space:nowrap;color:#3a3a3a">27.02.2025 19:00</div>
<div class="abs" style="left:481.09px;top:880.23px;font-size:18.10px;font-weight:normal;line-height:20px;white-space:nowrap;color:#212121">Світлана Шутка</div>
<div class="abs" style="left:726.52px;top:880.07px;font-size:18.56px;font-weight:normal;line-height:20px;white-space:nowrap;color:#3a3a3a">Básico 1.0 Пн/Пт 11:00 Поліни</div>
<div class="abs" style="left:1135.54px;top:880.75px;font-size:16.59px;font-weight:normal;line-height:20px;white-space:nowrap;color:#3a3a3a">1</div>
<div class="abs" style="left:1340.14px;top:880.00px;font-size:18.75px;font-weight:normal;line-height:20px;white-space:nowrap;color:#3a3a3a">0.00 грн</div>
<div class="abs" style="left:1560.79px;top:880.22px;font-size:18.14px;font-weight:normal;line-height:20px;white-space:nowrap;color:#3a3a3a">28.02.2025 11:00</div>
<div class="abs" style="left:480.49px;top:934.94px;font-size:18.93px;font-weight:normal;line-height:20px;white-space:nowrap;color:#212121">Марія Семенко</div>
<div class="abs" style="left:726.34px;top:935.13px;font-size:18.40px;font-weight:normal;line-height:20px;white-space:nowrap;color:#3a3a3a">Інд. Пт 14:30 Марія Семенко</div>
<div class="abs" style="left:1135.54px;top:935.75px;font-size:16.59px;font-weight:normal;line-height:20px;white-space:nowrap;color:#3a3a3a">1</div>
<div class="abs" style="left:1340.14px;top:935.00px;font-size:18.75px;font-weight:normal;line-height:20px;white-space:nowrap;color:#3a3a3a">0.00 грн</div>
<div class="abs" style="left:1560.80px;top:935.28px;font-size:17.96px;font-weight:normal;line-height:20px;white-space:nowrap;color:#3a3a3a">28.02.2025 14:30</div>
<div class="abs" style="left:481.26px;top:990.56px;font-size:18.60px;font-weight:normal;line-height:20px;white-space:nowrap;color:#212121">Олександр</div>
<div class="abs" style="left:481.26px;top:1010.09px;font-size:18.50px;font-weight:normal;line-height:20px;white-space:nowrap;color:#212121">Обухівський</div>
<div class="abs" style="left:726.36px;top:990.70px;font-size:18.18px;font-weight:normal;line-height:20px;white-space:nowrap;color:#3a3a3a">Інд. Пн 12:00, Ср 12:00 Олександр</div>
<div class="abs" style="left:727.26px;top:1010.09px;font-size:18.50px;font-weight:normal;line-height:20px;white-space:nowrap;color:#3a3a3a">Обухівський</div>
<div class="abs" style="left:1135.54px;top:1000.75px;font-size:16.59px;font-weight:normal;line-height:20px;white-space:nowrap;color:#3a3a3a">1</div>
<div class="abs" style="left:1340.14px;top:1000.00px;font-size:18.75px;font-weight:normal;line-height:20px;white-space:nowrap;color:#3a3a3a">0.00 грн</div>
<div class="abs" style="left:1561.16px;top:1000.29px;font-size:17.92px;font-weight:normal;line-height:20px;white-space:nowrap;color:#3a3a3a">03.03.2025 12:00</div>
<div class="abs" style="left:703px;top:535px;width:2px;height:485px;background:#dcdfe3"></div>
<div class="abs" style="left:1111px;top:535px;width:2px;height:485px;background:#dcdfe3"></div>
<div class="abs" style="left:1316px;top:535px;width:2px;height:485px;background:#dcdfe3"></div>
<div class="abs" style="left:1537px;top:535px;width:2px;height:485px;background:#dcdfe3"></div>
<div class="abs" style="left:458px;top:534px;width:1px;height:486px;background:#dcdfe3"></div>
<div class="abs" style="left:1811px;top:534px;width:2px;height:88px;background:#dcdfe3"></div><div class="abs" style="left:1812px;top:622px;width:1px;height:400px;background:#dcdfe3"></div>
<div class="abs" style="left:481.88px;top:578.22px;font-size:18.70px;font-weight:bold;line-height:25px;white-space:nowrap;color:#2b2b2b">ІМ'Я ТА ПРІЗВИЩЕ</div>
<div class="abs" style="left:726.92px;top:578.46px;font-size:18.00px;font-weight:bold;line-height:25px;white-space:nowrap;color:#2b2b2b">КУРС</div>
<div class="abs" style="left:1135.92px;top:553.13px;font-size:18.96px;font-weight:bold;line-height:25px;white-space:nowrap;color:#2b2b2b">ЗАЛИШОК</div>
<div class="abs" style="left:1136.30px;top:578.34px;font-size:18.36px;font-weight:bold;line-height:25px;white-space:nowrap;color:#2b2b2b">УРОКІВ</div>
<div class="abs" style="left:1340.45px;top:553.08px;font-size:19.11px;font-weight:bold;line-height:25px;white-space:nowrap;color:#2b2b2b">КОШТИ НА</div>
<div class="abs" style="left:1340.48px;top:578.23px;font-size:18.68px;font-weight:bold;line-height:25px;white-space:nowrap;color:#2b2b2b">БАЛАНСІ</div>
<div class="abs" style="left:1561.50px;top:553.23px;font-size:18.68px;font-weight:bold;line-height:25px;white-space:nowrap;color:#2b2b2b">ДАТА НАСТУПНОГО</div>
<div class="abs" style="left:1561.50px;top:578.38px;font-size:18.23px;font-weight:bold;line-height:25px;white-space:nowrap;color:#2b2b2b">УРОКУ</div>
</body></html>
